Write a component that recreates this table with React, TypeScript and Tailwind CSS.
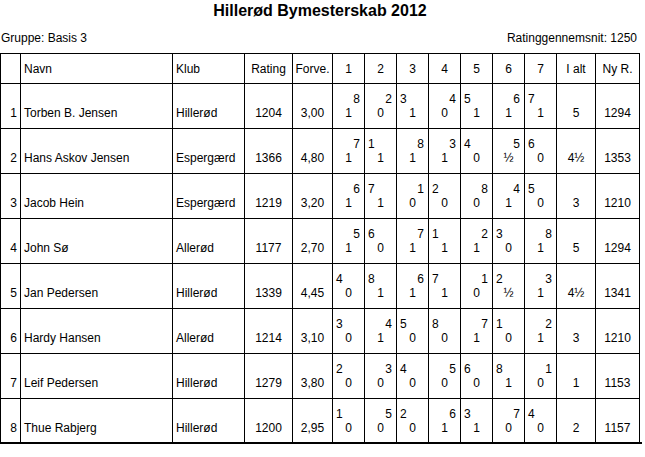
import React from "react";

type Game = [number, "L" | "R", string];
type Player = {
  no: number;
  name: string;
  club: string;
  rating: string;
  forv: string;
  games: Game[];
  total: string;
  ny: string;
};

const players: Player[] = [
  { no: 1, name: "Torben B. Jensen", club: "Hillerød", rating: "1204", forv: "3,00", games: [[8, "R", "1"], [2, "R", "0"], [3, "L", "1"], [4, "R", "0"], [5, "L", "1"], [6, "R", "1"], [7, "L", "1"]], total: "5", ny: "1294" },
  { no: 2, name: "Hans Askov Jensen", club: "Espergærd", rating: "1366", forv: "4,80", games: [[7, "R", "1"], [1, "L", "1"], [8, "R", "1"], [3, "R", "1"], [4, "L", "0"], [5, "R", "½"], [6, "L", "0"]], total: "4½", ny: "1353" },
  { no: 3, name: "Jacob Hein", club: "Espergærd", rating: "1219", forv: "3,20", games: [[6, "R", "1"], [7, "L", "1"], [1, "R", "0"], [2, "L", "0"], [8, "R", "0"], [4, "R", "1"], [5, "L", "0"]], total: "3", ny: "1210" },
  { no: 4, name: "John Sø", club: "Allerød", rating: "1177", forv: "2,70", games: [[5, "R", "1"], [6, "L", "0"], [7, "R", "1"], [1, "L", "1"], [2, "R", "1"], [3, "L", "0"], [8, "R", "1"]], total: "5", ny: "1294" },
  { no: 5, name: "Jan Pedersen", club: "Hillerød", rating: "1339", forv: "4,45", games: [[4, "L", "0"], [8, "L", "1"], [6, "R", "1"], [7, "L", "1"], [1, "R", "0"], [2, "L", "½"], [3, "R", "1"]], total: "4½", ny: "1341" },
  { no: 6, name: "Hardy Hansen", club: "Allerød", rating: "1214", forv: "3,10", games: [[3, "L", "0"], [4, "R", "1"], [5, "L", "0"], [8, "L", "0"], [7, "R", "1"], [1, "L", "0"], [2, "R", "1"]], total: "3", ny: "1210" },
  { no: 7, name: "Leif Pedersen", club: "Hillerød", rating: "1279", forv: "3,80", games: [[2, "L", "0"], [3, "R", "0"], [4, "L", "0"], [5, "R", "0"], [6, "L", "0"], [8, "L", "1"], [1, "R", "0"]], total: "1", ny: "1153" },
  { no: 8, name: "Thue Rabjerg", club: "Hillerød", rating: "1200", forv: "2,95", games: [[1, "L", "0"], [5, "R", "0"], [2, "L", "0"], [6, "R", "1"], [3, "L", "1"], [7, "R", "0"], [4, "L", "0"]], total: "2", ny: "1157" },
];

function Cell({ last, align, children }: { last: boolean; align: "left" | "right" | "center"; children: React.ReactNode }) {
  const h = last ? "h-[43px]" : "h-[45px] border-b";
  const a = align === "left" ? "text-left" : align === "right" ? "text-right" : "text-center";
  return (
    <div className={`${h} border-r border-black flex flex-col justify-center px-[3px] whitespace-nowrap overflow-hidden ${a}`}>
      <div className="h-[14px]" />
      <div className="h-[14px]">{children}</div>
    </div>
  );
}

function GameCell({ last, game }: { last: boolean; game: Game }) {
  const h = last ? "h-[43px]" : "h-[45px] border-b";
  return (
    <div className={`${h} border-r border-black flex flex-col justify-center whitespace-nowrap`}>
      <div className={game[1] === "L" ? "h-[14px] text-left pl-[3px]" : "h-[14px] text-right pr-[4px]"}>{game[0]}</div>
      <div className="h-[14px] text-center">{game[2]}</div>
    </div>
  );
}

function Head({ align, children }: { align: "left" | "center"; children: React.ReactNode }) {
  return (
    <div className={`h-[30px] border-r border-b border-black flex items-center px-[3px] whitespace-nowrap overflow-hidden ${align === "left" ? "justify-start" : "justify-center"}`}>
      {children}
    </div>
  );
}

export default function App() {
  return (
    <div className="w-[645px] h-[457px] bg-white text-black font-['Liberation_Sans',Arial,sans-serif] text-[12px] leading-[14px]">
      <div className="w-[640px]">
        <h1 className="pt-[2px] text-center text-[16px] leading-[18px] font-bold">Hillerød Bymesterskab 2012</h1>
        <div className="mt-[11px] flex justify-between pl-px pr-[3px]">
          <span>Gruppe: Basis 3</span>
          <span>Ratinggennemsnit: 1250</span>
        </div>
        <div className="mt-[8px] border-l border-t border-black grid grid-cols-[20px_152px_72px_48px_40px_32px_32px_32px_32px_32px_32px_32px_39px_44px]">
          <Head align="left">{""}</Head>
          <Head align="left">Navn</Head>
          <Head align="left">Klub</Head>
          <Head align="center">Rating</Head>
          <Head align="center">Forve.</Head>
          {[1, 2, 3, 4, 5, 6, 7].map((r) => (
            <Head key={r} align="center">{r}</Head>
          ))}
          <Head align="center">I alt</Head>
          <Head align="center">Ny R.</Head>
          {players.map((p, i) => {
            const last = i === players.length - 1;
            return (
              <React.Fragment key={p.no}>
                <Cell last={last} align="right">{p.no}</Cell>
                <Cell last={last} align="left">{p.name}</Cell>
                <Cell last={last} align="left">{p.club}</Cell>
                <Cell last={last} align="center">{p.rating}</Cell>
                <Cell last={last} align="center">{p.forv}</Cell>
                {p.games.map((g, j) => (
                  <GameCell key={j} last={last} game={g} />
                ))}
                <Cell last={last} align="center">{p.total}</Cell>
                <Cell last={last} align="center">{p.ny}</Cell>
              </React.Fragment>
            );
          })}
        </div>
      </div>
      <div className="w-[642px] h-[2px] bg-black" />
    </div>
  );
}
